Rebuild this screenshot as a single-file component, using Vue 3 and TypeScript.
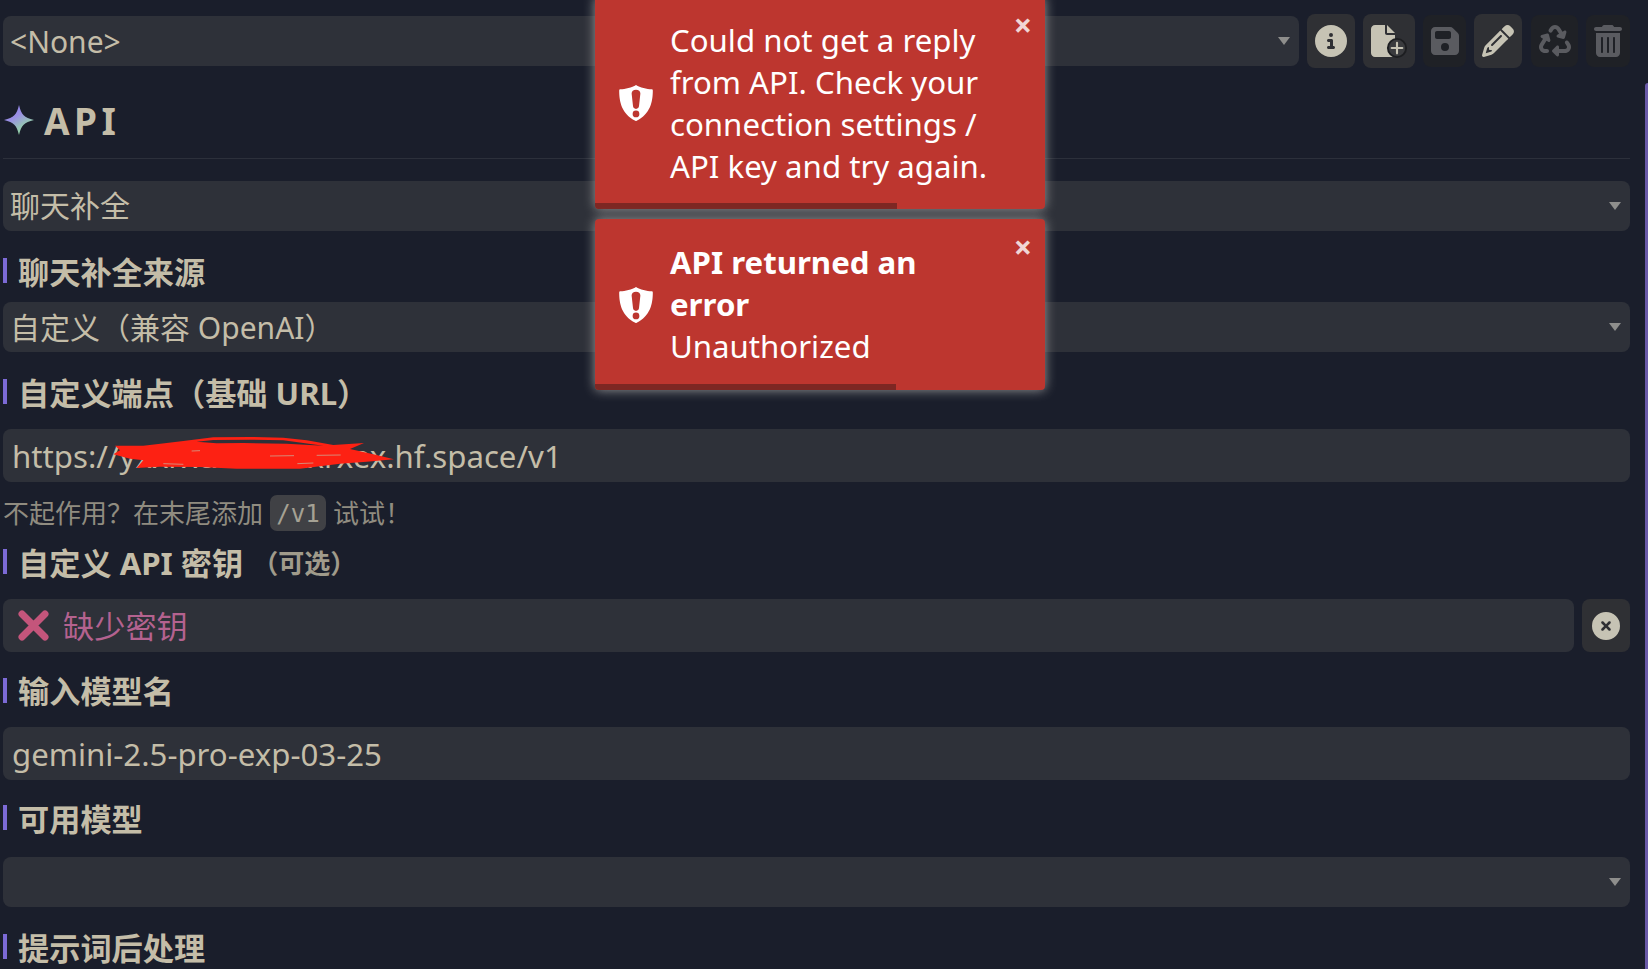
<script setup lang="ts">
interface Tool { key: string; box: string; dim: boolean; wide: string; path: string; vb: string }
const tools: Tool[] = [
  { key: 'info', box: 'b48', dim: false, wide: 'i32', vb: '0 0 512 512', path: 'M256 512A256 256 0 1 0 256 0a256 256 0 1 0 0 512zM216 336h24V272H216c-13.3 0-24-10.7-24-24s10.7-24 24-24h48c13.3 0 24 10.7 24 24v88h8c13.3 0 24 10.7 24 24s-10.7 24-24 24H216c-13.3 0-24-10.7-24-24s10.7-24 24-24zm40-208a32 32 0 1 1 0 64 32 32 0 1 1 0-64z' },
  { key: 'save', box: 'b43', dim: true, wide: 'i28', vb: '0 0 448 512', path: 'M64 32C28.7 32 0 60.7 0 96V416c0 35.3 28.7 64 64 64H384c35.3 0 64-28.7 64-64V173.3c0-17-6.7-33.3-18.7-45.3L352 50.7C340 38.7 323.7 32 306.7 32H64zm0 96c0-17.7 14.3-32 32-32H288c17.7 0 32 14.3 32 32v64c0 17.7-14.3 32-32 32H96c-17.7 0-32-14.3-32-32V128zM224 288a64 64 0 1 1 0 128 64 64 0 1 1 0-128z' },
  { key: 'edit', box: 'b48', dim: false, wide: 'i32', vb: '0 0 512 512', path: 'M410.3 231l11.3-11.3-33.9-33.9-62.1-62.1L291.7 89.8l-11.3 11.3-22.6 22.6L58.6 322.9c-10.4 10.4-18 23.3-22.2 37.4L1 480.7c-2.5 8.4-.2 17.5 6.1 23.7s15.3 8.5 23.7 6.1l120.3-35.4c14.1-4.2 27-11.8 37.4-22.2L387.7 253.7 410.3 231zM160 399.4l-9.1 22.7c-4 3.1-8.5 5.4-13.3 6.9L59.4 452l23-78.1c1.4-4.9 3.8-9.4 6.9-13.3l22.7-9.1v32c0 8.8 7.2 16 16 16h32zM362.7 18.7L348.3 33.2 325.7 55.8 314.3 67.1l33.9 33.9 62.1 62.1 33.9 33.9 11.3-11.3 22.6-22.6 14.5-14.5c25-25 25-65.5 0-90.5L453.3 18.7c-25-25-65.5-25-90.5 0zm-47.4 168l-144 144c-6.2 6.2-16.4 6.2-22.6 0s-6.2-16.4 0-22.6l144-144c6.2-6.2 16.4-6.2 22.6 0s6.2 16.4 0 22.6z' },
  { key: 'recycle', box: 'b47', dim: true, wide: 'i32', vb: '0 0 512 512', path: 'M174.7 45.1C192.2 17 223 0 256 0s63.8 17 81.3 45.1l38.6 61.7 27-15.6c8.4-4.9 18.9-4.2 26.6 1.7s11.1 15.9 8.6 25.3l-23.4 87.4c-3.4 12.8-16.6 20.4-29.4 17l-87.4-23.4c-9.4-2.5-16.3-10.4-17.6-20s3.4-19.1 11.8-23.9l28.4-16.4L283 79c-5.8-9.3-16-15-27-15s-21.2 5.7-27 15l-17.5 28c-9.2 14.8-28.6 19.5-43.6 10.5c-15.3-9.2-20.2-29.2-10.7-44.4l17.5-28zM429.5 251.9c15-9 34.4-4.3 43.6 10.5l24.4 39.1c9.4 15.1 14.4 32.4 14.6 50.2c.3 53.1-42.7 96.4-95.8 96.4L320 448v32c0 9.7-5.8 18.5-14.8 22.2s-19.3 1.7-26.2-5.2l-64-64c-9.4-9.4-9.4-24.6 0-33.9l64-64c6.9-6.9 17.2-8.9 26.2-5.2s14.8 12.5 14.8 22.2v32l96.2 0c17.6 0 31.9-14.4 31.8-32c0-5.9-1.7-11.7-4.8-16.7l-24.4-39.1c-9.5-15.2-4.7-35.2 10.7-44.4zm-364.6-31L36 204.2c-8.4-4.9-13.1-14.3-11.8-23.9s8.2-17.5 17.6-20l87.4-23.4c12.8-3.4 26 4.2 29.4 17L182 241.2c2.5 9.4-.9 19.3-8.6 25.3s-18.2 6.6-26.6 1.7l-26.5-15.3L68.8 335.3c-3.1 5-4.8 10.8-4.8 16.7c-.1 17.6 14.2 32 31.8 32l32.2 0c17.7 0 32 14.3 32 32s-14.3 32-32 32l-32.2 0C42.7 448-.3 404.8 0 351.6c.1-17.8 5.1-35.1 14.6-50.2l50.3-80.5z' },
  { key: 'trash', box: 'b44', dim: true, wide: 'i28', vb: '0 0 448 512', path: 'M135.2 17.7C140.6 6.8 151.7 0 163.8 0H284.2c12.1 0 23.2 6.8 28.6 17.7L320 32h96c17.7 0 32 14.3 32 32s-14.3 32-32 32H32C14.3 96 0 81.7 0 64S14.3 32 32 32h96l7.2-14.3zM32 128H416V448c0 35.3-28.7 64-64 64H96c-35.3 0-64-28.7-64-64V128zm96 64c-8.8 0-16 7.2-16 16V432c0 8.8 7.2 16 16 16s16-7.2 16-16V208c0-8.8-7.2-16-16-16zm96 0c-8.8 0-16 7.2-16 16V432c0 8.8 7.2 16 16 16s16-7.2 16-16V208c0-8.8-7.2-16-16-16zm96 0c-8.8 0-16 7.2-16 16V432c0 8.8 7.2 16 16 16s16-7.2 16-16V208c0-8.8-7.2-16-16-16z' },
]
const beforeFile = tools.slice(0, 1)
const afterFile = tools.slice(1)
const shield = 'M50 0 C62 8 82 12 97 13 C99 13 100 14 100 16 C100 50 92 86 52 106 C51 107 49 107 48 106 C8 86 0 50 0 16 C0 14 1 13 3 13 C18 12 38 8 50 0 Z M50 14 C42 14 37 18 37 25 L41 62 C41 68 45 71 50 71 C55 71 59 68 59 62 L63 25 C63 18 58 14 50 14 Z M50 76 A10 10 0 1 0 50 96 A10 10 0 1 0 50 76 Z'
</script>

<template>
  <div class="page">
    <div class="scroll-thumb"></div>

    <div class="topbar">
      <div class="field select grow"><span>&lt;None&gt;</span><i class="arrow"></i></div>
      <div class="tools">
        <div v-for="t in beforeFile" :key="t.key" class="tool" :class="[t.box, { dim: t.dim }]">
          <svg :class="t.wide" :viewBox="t.vb"><path :d="t.path" /></svg>
        </div>
        <div class="tool b52">
          <svg class="i36" viewBox="0 0 576 512">
            <path d="M0 64C0 28.7 28.7 0 64 0H224V128c0 17.7 14.3 32 32 32H384V448c0 35.300-28.700 64-64 64H64c-35.3 0-64-28.700-64-64V64zm384 64H256V0L384 128z" />
            <circle cx="416" cy="368" r="146" class="ring" />
            <path d="M416 283V453M331 368H501" class="plus" />
          </svg>
        </div>
        <div v-for="t in afterFile" :key="t.key" class="tool" :class="[t.box, t.key, { dim: t.dim }]">
          <svg :class="t.wide" :viewBox="t.vb"><path :d="t.path" /></svg>
        </div>
      </div>
    </div>

    <h2 class="heading">
      <svg class="star" viewBox="0 0 30 30">
        <defs>
          <linearGradient id="starFill" x1="0.15" y1="0.1" x2="0.7" y2="1">
            <stop offset="0" stop-color="#8f82ea" />
            <stop offset="0.35" stop-color="#9a8fe4" />
            <stop offset="0.7" stop-color="#96c4b6" />
            <stop offset="1" stop-color="#96e0a0" />
          </linearGradient>
        </defs>
        <path d="M15 0 C17.500 10 20 12.500 30 15 C20 17.500 17.500 20 15 30 C12.500 20 10 17.500 0 15 C10 12.500 12.500 10 15 0 Z" fill="url(#starFill)" />
      </svg>
      <span>API</span>
    </h2>

    <div class="field select first"><span class="up4">聊天补全</span><i class="arrow"></i></div>

    <div class="label tight"><span>聊天补全来源</span></div>
    <div class="field select"><span class="up2">自定义（兼容 OpenAI）</span><i class="arrow"></i></div>

    <div class="label"><span>自定义端点（基础 URL）</span></div>
    <div class="field input">
      <span>https://yxxrxcxxrxxxxrxex.hf.space/v1</span>
      <svg class="scribble" viewBox="0 0 960 180">
        <path d="M45 62 L130 62 L200 54 L250 48 L340 37 L450 36 L550 38 L620 46 L700 60 L792 54 L750 72 L820 88 L882 103 L800 110 L720 116 L600 131 L410 131 L300 126 L180 125 L110 129 L130 106 L90 101 L40 88 L60 76 Z" fill="#fd2113" />
        <path d="M290 50 L340 45 L450 44 L550 46 L610 54 L670 62 L560 56 L430 54 L350 55 Z" fill="#2e3139" />
        <path d="M510 93 L582 92 M275 78 L300 77 M592 116 L640 114 M650 91 L722 90 M190 116 L250 118" fill="none" stroke="#c4bda8" stroke-width="2" />
      </svg>
    </div>
    <div class="hint">不起作用？在末尾添加 <code>/v1</code> 试试！</div>

    <div class="label after-hint"><span>自定义 API 密钥</span><small>（可选）</small></div>
    <div class="key-row">
      <div class="field input key grow">
        <svg class="cross" viewBox="0 0 31 31"><path d="M4 4 L27 27 M27 4 L4 27" /></svg>
        <span>缺少密钥</span>
      </div>
      <div class="tool clear">
        <svg class="i28" viewBox="0 0 512 512"><path d="M256 512A256 256 0 1 0 256 0a256 256 0 1 0 0 512zM175 175c9.400-9.400 24.600-9.400 33.900 0l47 47 47-47c9.400-9.400 24.600-9.400 33.900 0s9.400 24.600 0 33.900l-47 47 47 47c9.400 9.400 9.400 24.600 0 33.900s-24.600 9.400-33.900 0l-47-47-47 47c-9.400 9.400-24.600 9.400-33.900 0s-9.400-24.600 0-33.900l47-47-47-47c-9.400-9.400-9.400-24.600 0-33.900z" /></svg>
      </div>
    </div>

    <div class="label model"><span>输入模型名</span></div>
    <div class="field input"><span>gemini-2.5-pro-exp-03-25</span></div>

    <div class="label loose"><span>可用模型</span></div>
    <div class="field select"><i class="arrow"></i></div>

    <div class="label"><span>提示词后处理</span></div>

    <div class="toasts">
      <div class="toast one">
        <svg class="shield" viewBox="0 0 100 107"><path :d="shield" fill-rule="evenodd" /></svg>
        <div class="message">Could not get a reply from API. Check your connection settings / API key and try again.</div>
        <span class="close">×</span>
        <i class="progress p1"></i>
      </div>
      <div class="toast two">
        <svg class="shield" viewBox="0 0 100 107"><path :d="shield" fill-rule="evenodd" /></svg>
        <div class="message"><b>API returned an error</b><br />Unauthorized</div>
        <span class="close">×</span>
        <i class="progress p2"></i>
      </div>
    </div>
  </div>
</template>

<style>
html, body { background: #1a1e2b; }
</style>

<style scoped>
.page {
  position: relative;
  box-sizing: border-box;
  width: 1648px;
  height: 969px;
  padding: 14px 18px 0 3px;
  overflow: hidden;
  background: #1a1e2b;
  color: #c4bda8;
  font-family: "Noto Sans", "Noto Sans CJK SC", sans-serif;
}
.scroll-thumb {
  position: absolute;
  right: 0;
  top: 83px;
  bottom: 0;
  width: 3px;
  border-radius: 3px 0 0 0;
  background: #6a5aa8;
}
.topbar { display: flex; align-items: center; height: 54px; gap: 8px; }
.grow { flex: 1; min-width: 0; }
.tools { display: flex; align-items: center; gap: 8px; }
.tool {
  display: flex;
  align-items: center;
  justify-content: center;
  height: 54px;
  border-radius: 8px;
  background: #2f3034;
  flex: none;
}
.tool svg { fill: #c6c3b4; display: block; overflow: visible; }
.tool .ring { fill: #3a3b3e; stroke: #1d1e21; stroke-width: 30; }
.tool .plus { fill: none; stroke: #c6c3b4; stroke-width: 34; stroke-linecap: round; }
.tool.dim { height: 52px; background: #1f2126; }
.tool.dim svg { fill: #5a5b60; }
.tool.recycle { margin-left: 1px; }
.b48 { width: 48px; }
.b52 { width: 52px; }
.b43 { width: 43px; }
.b47 { width: 47px; }
.b44 { width: 44px; }
.i32 { width: 32px; height: 32px; }
.i28 { width: 28px; height: 32px; }
.i36 { width: 36px; height: 32px; }
.field {
  position: relative;
  display: flex;
  align-items: center;
  box-sizing: border-box;
  border-radius: 8px;
  background: #2e3139;
  white-space: nowrap;
}
.select { height: 50px; padding-left: 7px; font-size: 30px; }
.up4 { padding-bottom: 4px; }
.up2 { padding-bottom: 2px; }
.input { height: 53px; padding-left: 9px; font-size: 31.2px; }
.arrow {
  position: absolute;
  right: 9px;
  top: 21px;
  width: 0;
  height: 0;
  border-left: 6px solid transparent;
  border-right: 6px solid transparent;
  border-top: 8px solid #8e8e8c;
}
.heading {
  display: flex;
  align-items: center;
  gap: 10px;
  box-sizing: border-box;
  height: 91px;
  margin: 0;
  padding: 14px 0 0 1px;
  border-bottom: 1px solid #2c303b;
  font-size: 37px;
  font-weight: 700;
  letter-spacing: 4.500px;
}
.star { width: 30px; height: 30px; flex: none; }
.first { margin-top: 22px; }
.label {
  display: flex;
  align-items: center;
  box-sizing: border-box;
  height: 25px;
  margin: 27px 0 25px;
  padding: 3px 0 0 11px;
  border-left: 4px solid #7c6ad6;
  font-size: 31.2px;
  font-weight: 700;
  line-height: 25px;
  white-space: nowrap;
}
.label.tight { margin-bottom: 19px; }
.label.model { margin: 26px 0 24px; padding-top: 1px; }
.label.loose { margin: 25px 0 27px; }
.label.after-hint { margin-top: 18px; }
.label small { margin-left: 9px; font-size: 26px; font-weight: 700; color: #a09b8b; }
.scribble {
  position: absolute;
  left: 97px;
  top: -4px;
  width: 320px;
  height: 60px;
  overflow: visible;
}
.hint {
  display: flex;
  align-items: center;
  box-sizing: border-box;
  height: 36px;
  margin-top: 13px;
  padding-bottom: 2px;
  font-size: 26px;
  color: #908c80;
  white-space: pre;
}
.hint code {
  display: inline-flex;
  align-items: center;
  box-sizing: border-box;
  height: 36px;
  margin-bottom: -2px;
  padding: 2px 6.500px 0;
  border-radius: 7px;
  background: #404145;
  font-family: "DejaVu Sans Mono", monospace;
  font-size: 24px;
  color: #a5a194;
}
.key-row { display: flex; gap: 8px; }
.key { color: #b4628f; padding-bottom: 2px; }
.cross { width: 31px; height: 31px; margin: 2px 14px 0 6px; flex: none; }
.cross path { fill: none; stroke: #c4557b; stroke-width: 7; stroke-linecap: round; }
.clear { width: 48px; height: 53px; }
.toasts {
  position: absolute;
  left: 595px;
  top: -3px;
  width: 450px;
}
.toast {
  position: relative;
  display: flex;
  align-items: center;
  box-sizing: border-box;
  width: 450px;
  padding: 22px 50px 22px 75px;
  border-radius: 0 0 4px 4px;
  background: #bd362f;
  color: #fff;
  font-size: 31.2px;
  line-height: 42px;
  box-shadow: 0 0 12px #999;
}
.toast.two { margin-top: 10px; border-radius: 4px; padding-bottom: 23px; }
.shield { position: absolute; left: 24px; top: 50%; margin-top: -18px; width: 34px; height: 36px; fill: #fff; }
.close {
  position: absolute;
  right: 13px;
  top: 8px;
  font-size: 32px;
  font-weight: 700;
  line-height: 40px;
  color: #fff;
  opacity: 0.8;
}
.progress { position: absolute; left: 0; bottom: 0; height: 6px; background: #7d2723; border-radius: 0 0 0 4px; }
.p1 { width: 302px; }
.p2 { width: 301px; }
</style>
